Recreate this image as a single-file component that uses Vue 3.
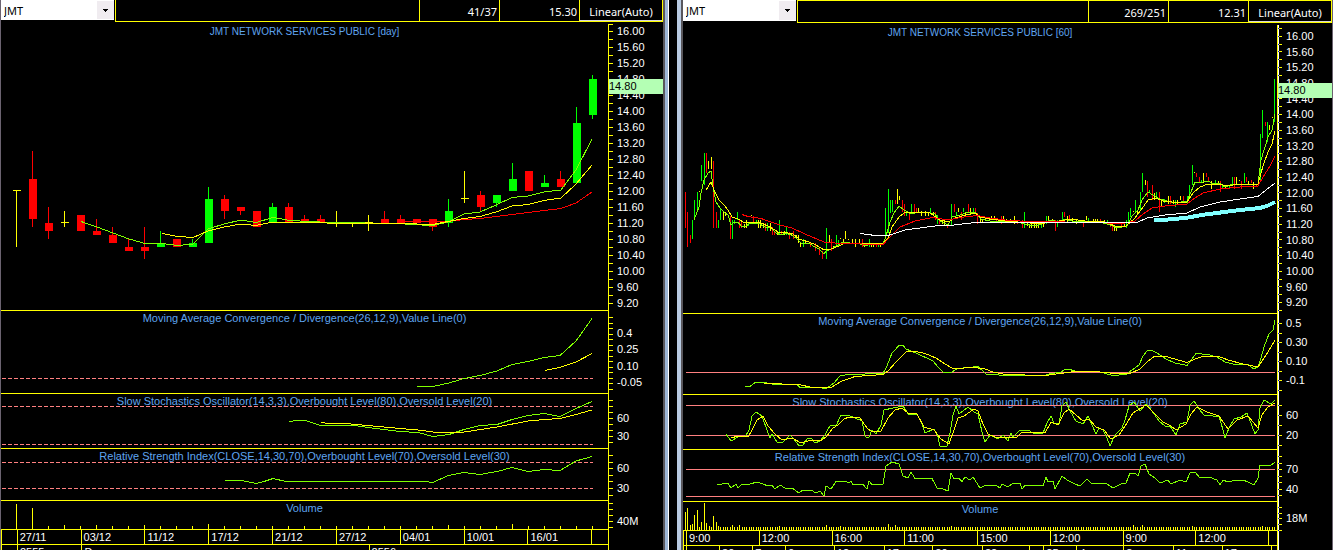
<script setup>
import { ref } from 'vue';

// high, body top, body bottom, low
const dayPrices = [
  [12.0, 12.0, 12.0, 10.6], [13.0, 12.3, 11.3, 11.1], [11.6, 11.2, 11.0, 10.8], [11.5, 11.2, 11.2, 11.1],
  [11.4, 11.4, 11.0, 11.0], [11.3, 11.0, 10.9, 10.9], [11.1, 10.9, 10.7, 10.7], [10.8, 10.6, 10.5, 10.5],
  [11.1, 10.6, 10.5, 10.3], [11.0, 10.7, 10.6, 10.6, 1], [10.8, 10.8, 10.6, 10.6], [10.8, 10.7, 10.6, 10.6, 1],
  [12.1, 11.8, 10.7, 10.7, 1], [11.9, 11.8, 11.5, 11.3], [11.6, 11.6, 11.5, 11.4], [11.5, 11.5, 11.1, 11.1],
  [11.7, 11.6, 11.2, 11.2, 1], [11.7, 11.6, 11.2, 11.2], [11.4, 11.3, 11.2, 11.2], [11.4, 11.3, 11.2, 11.2],
  [11.5, 11.2, 11.2, 11.1], [11.2, 11.2, 11.2, 11.1], [11.4, 11.2, 11.2, 11.0], [11.5, 11.3, 11.2, 11.2],
  [11.4, 11.3, 11.2, 11.2], [11.3, 11.3, 11.2, 11.2], [11.3, 11.3, 11.1, 11.0], [11.8, 11.5, 11.2, 11.1, 1],
  [12.5, 11.8, 11.8, 11.7], [12.0, 11.9, 11.6, 11.5], [11.9, 11.9, 11.7, 11.6, 1], [12.7, 12.3, 12.0, 12.0, 1],
  [12.5, 12.5, 12.0, 12.0], [12.4, 12.2, 12.1, 12.1, 1], [12.5, 12.3, 12.1, 12.1], [14.1, 13.7, 12.2, 12.2, 1],
  [14.9, 14.8, 13.9, 13.8, 1]
];
const dayY = (price) => Math.round(31 + (16 - price) * 40);
const dayBars = dayPrices.flatMap(([high, top, bottom, low, up], i) => {
  const x = 16 + i * 16;
  const doji = top === bottom;
  const color = doji ? 'y' : up ? 'g' : 'r';
  const body = doji
    ? { x: x - 3, y: dayY(top) - 1, w: 8, h: 1, color }
    : { x: x - 3, y: dayY(top), w: 8, h: dayY(bottom) - dayY(top), color };
  return [{ x, y: dayY(high), w: 1, h: dayY(low) - dayY(high), color }, body];
});

// x, top, bottom, colour
const hourBars = `685 192 228 r,687 212 247 r,690 235 243 r,692 220 239 g,694 200 220 g,697 192 210 g,699 191 192 y,
701 165 181 g,704 153 185 g,706 153 173 r,708 161 169 y,711 157 169 y,713 161 228 r,716 212 228 r,718 220 228 g,
720 208 220 g,723 212 220 y,725 212 216 y,730 216 239 r,732 220 239 g,734 220 224 g,737 212 220 g,739 220 228 r,
741 222 228 r,744 224 228 y,746 220 228 y,748 222 226 g,751 215 216 y,753 216 223 r,756 220 224 g,758 220 228 y,
760 220 228 y,763 223 228 y,765 223 231 r,767 223 231 g,770 223 231 y,772 227 235 r,774 231 235 r,777 231 235 y,
779 220 235 g,781 231 235 r,784 231 235 y,786 227 235 g,789 232 239 r,791 233 236 y,793 231 239 r,796 235 239 y,
798 235 243 y,800 243 247 y,803 239 247 g,805 241 244 y,810 243 247 r,815 243 251 r,819 247 255 r,822 251 259 r,
826 228 259 g,829 235 243 y,831 239 251 r,833 246 247 y,836 235 247 g,838 240 247 g,840 238 239 y,843 239 243 y,
845 231 239 y,848 239 240 y,852 239 243 y,855 239 247 y,859 239 243 y,862 239 247 r,864 243 247 y,869 239 247 g,
871 243 247 y,873 243 247 y,876 243 247 r,878 243 247 g,880 243 247 y,
885 208 237 g,888 189 233 g,890 200 213 g,892 200 212 g,895 200 204 r,897 189 204 y,899 196 200 y,902 200 212 r,
904 204 216 r,906 212 216 g,909 212 220 r,911 204 212 g,914 204 212 r,916 208 212 r,918 208 212 y,921 211 216 y,
925 211 216 y,928 212 216 y,930 208 214 g,933 212 216 y,935 212 220 r,937 215 224 g,939 220 224 r,942 220 224 y,
944 220 225 y,947 224 228 r,951 204 225 g,954 204 212 r,956 212 216 g,958 208 212 y,961 212 220 r,963 208 212 g,
965 212 216 y,968 204 212 r,970 208 212 y,973 208 212 g,975 208 213 r,977 213 224 r,980 216 223 y,982 220 223 y,
985 219 221 g,989 218 220 y,991 216 220 y,994 216 220 y,996 219 222 r,999 219 222 y,
1001 216 224 r,1003 216 223 y,1006 219 223 y,1010 219 222 y,1014 216 224 y,1017 220 224 r,1022 220 228 r,
1024 212 228 g,1027 222 226 y,1029 224 228 y,1031 224 228 y,1034 224 228 y,1036 224 228 y,1038 224 228 y,1041 224 228 g,
1043 222 227 y,1046 216 224 g,1048 216 220 y,1052 219 222 y,1055 220 231 r,1057 220 227 g,1059 220 223 y,
1062 212 222 g,1064 212 217 r,1067 216 222 y,1069 215 220 r,1072 218 222 y,1076 220 224 y,1079 220 223 r,
1083 220 227 r,1086 216 220 y,1088 218 222 g,1093 219 223 y,1095 219 223 y,1097 219 223 y,1100 219 222 r,
1104 220 224 y,1107 220 223 g,1110 222 227 r,1112 224 231 r,1114 227 231 y,1116 227 231 y,1121 224 228 r,
1124 224 227 y,1126 220 228 g,1128 212 222 g,1130 208 217 g,1133 211 212 y,1135 200 213 g,1137 210 215 y,
1140 192 210 g,1142 173 192 g,1145 180 185 y,1147 181 197 r,1149 190 193 g,1152 185 200 r,1154 193 200 y,
1156 192 196 g,1159 192 212 r,1161 199 207 y,1164 199 203 g,1168 196 204 y,1170 196 204 r,1173 200 204 y,
1175 200 207 g,1177 200 204 y,1180 196 200 y,1183 196 203 r,1187 196 203 g,1189 185 198 g,1192 165 185 g,
1194 172 173 y,1196 173 177 r,1199 177 183 r,1201 180 183 g,1203 173 183 y,1206 173 177 r,1208 177 182 r,
1211 181 189 y,1215 180 185 g,1218 181 184 y,1220 181 192 r,1222 185 188 g,1225 186 189 y,1229 185 189 g,
1232 177 185 g,1234 177 189 r,1236 177 185 y,1239 180 181 y,1241 181 189 r,1244 173 183 g,1246 177 182 r,
1248 181 185 y,1251 180 183 r,1253 182 189 y,1256 184 187 r,1260 134 182 g,1262 110 138 g,1265 122 126 r,
1267 122 142 g,1269 125 130 y,1272 117 118 y,1274 79 122 g`
  .split(',')
  .map((row) => {
    const [x, top, bottom, color] = row.trim().split(' ');
    return { x: +x, y: +top, w: 1, h: bottom - top, color };
  });

const volumeBars = (first, step, count, base, tops) =>
  Array.from({ length: count }, (_, i) => {
    const x = Math.round(first + i * step);
    const h = tops[i] || 3;
    return { x, y: base - h, w: 1, h, color: 'y' };
  });

const ticks = (from, step, count) => Array.from({ length: count }, (_, i) => Math.round(from + i * step));
const priceLabels = (from, step) =>
  Array.from({ length: 18 }, (_, i) => ({ y: Math.round(from + i * step), text: (16 - i * 0.4).toFixed(2) }));

const charts = ref([
  {
    id: 'day',
    ratio: '41/37',
    last: '15.30',
    left: 1,
    width: 607,
    top: 22,
    tag: 79,
    panels: [
      {
        title: 'JMT NETWORK SERVICES PUBLIC [day]',
        top: 22,
        height: 289,
        bars: dayBars,
        lines: [
          { color: 'red', points: '405,221.5 448,221.5 464,219.5 480,218.5 512,214.5 544,210.5 561,208.5 576,203 592,192' },
          { color: 'lime', points: '81,221.5 97,227 113,233 129,239 145,243.5 162,243.5 178,245.5 193,244 208,229 224,224 241,220 256,222.5 273,217.5 290,220.5 310,221.5 330,222.5 400,223.5 410,224.5 433,225.5 448,222 464,214 480,212 496,205 512,197.5 528,196 544,192 561,190 576,170 592,139' },
          { color: 'yellow', points: '162,233.5 178,236.5 193,237.5 208,231 224,227 241,224 256,225.5 270,222.5 313,222.5 340,223.5 400,223.5 433,224.5 448,221.5 464,218.5 480,216.5 496,212 512,206 528,204.5 544,200.5 561,198 576,184 592,165' }
        ]
      },
      {
        title: 'Moving Average Convergence / Divergence(26,12,9),Value Line(0)',
        top: 311,
        height: 83,
        levels: [378],
        lines: [
          { color: 'lime', points: '417,386.5 433,386.5 449,383 464,378.5 480,375.5 497,371 512,364.5 528,361.5 544,357.5 560,355.5 576,341 592,318.5' },
          { color: 'yellow', points: '545,370.5 560,367.5 576,362 592,353.5' }
        ]
      },
      {
        title: 'Slow Stochastics Oscillator(14,3,3),Overbought Level(80),Oversold Level(20)',
        top: 394,
        height: 55,
        levels: [406, 444],
        lines: [
          { color: 'lime', points: '289,421.5 297,420.5 305,420.5 312,422.5 320,425.5 355,425.5 368,427.5 400,431.5 418,432.5 433,436.5 449,434.5 464,429.5 480,425.5 497,424.5 512,419.5 528,415.5 544,413.5 560,416.5 576,408.5 592,401.5' },
          { color: 'yellow', points: '321,422.5 329,423.5 345,423.5 368,425.5 400,428.5 418,430 433,432 449,433 464,432 497,427 528,421 544,419.5 560,418.5 576,414.5 592,410' }
        ]
      },
      {
        title: 'Relative Strength Index(CLOSE,14,30,70),Overbought Level(70),Oversold Level(30)',
        top: 449,
        height: 52,
        levels: [462, 488],
        lines: [
          { color: 'lime', points: '225,480.5 242,480.5 256,483.5 264,481.5 273,478.5 286,481.5 424,481.5 433,482.5 448,475.5 464,472.5 480,474.5 497,471.5 512,467.5 528,471.5 544,469.5 560,470.5 576,461 592,456.5' }
        ]
      },
      {
        title: 'Volume',
        top: 501,
        height: 29,
        bars: volumeBars(16, 16, 37, 529, { 0: 25, 1: 21, 3: 4, 5: 4, 8: 4, 12: 5, 27: 4, 31: 5 }),
        lines: []
      }
    ],
    times: [
      [15, ''], [64, '27/11'], [64, '03/12'], [64, '11/12'], [64, '17/12'], [64, '21/12'], [64, '27/12'],
      [64, '04/01'], [64, '10/01'], [64, '16/01'], [16, '']
    ],
    days: [[15, ''], [64, '2555'], [288, 'D'], [240, '2556']],
    ticks: [24, ...ticks(31, 8, 35), ...ticks(317, 5.5, 14), ...ticks(400, 6, 8), ...ticks(455, 6.6, 7), ...ticks(503, 6, 5)],
    labels: [
      ...priceLabels(31, 16),
      { y: 333, text: '0.4' }, { y: 349, text: '0.25' }, { y: 366, text: '0.10' }, { y: 382, text: '-0.05' },
      { y: 418, text: '60' }, { y: 436, text: '30' }, { y: 468, text: '60' }, { y: 488, text: '30' }, { y: 521, text: '40M' }
    ]
  },
  {
    id: 'hour',
    ratio: '269/251',
    last: '12.31',
    left: 683,
    width: 594,
    top: 23,
    tag: 83,
    panels: [
      {
        title: 'JMT NETWORK SERVICES PUBLIC [60]',
        top: 23,
        height: 291,
        bars: hourBars,
        lines: [
          { color: 'lime', points: '694,220 697,212 699,207 701,193 704,180 708,173 711,171 713,187 716,202 720,208 725,213 728,215 731,225 734,222 738,222 741,226 745,227 750,223 758,223 765,227 770,227 776,233 781,235 786,233 791,235 796,238 801,243 810,244 815,247 819,249 824,254 826,251 831,249 836,246 843,242 850,243 858,243 865,246 871,244 883,244 886,236 890,222 894,213 899,206 904,210 911,214 918,212 930,213 935,214 940,221 948,225 952,217 960,215 968,212 975,212 981,219 990,221 1014,221 1024,224 1035,226 1042,224 1050,220 1060,222 1065,219 1072,221 1085,221 1100,222 1110,225 1118,228 1127,226 1132,216 1138,210 1142,200 1148,192 1153,195 1160,199 1167,201 1175,203 1187,201 1191,192 1195,182 1203,182 1208,181 1213,184 1219,183 1225,187 1233,184 1258,184 1261,160 1265,147 1268,137 1272,130 1275,114' },
          { color: 'yellow', points: '706,190 711,182 714,190 719,200 724,205 728,210 732,217 738,219 745,223 753,222 761,223 770,227 778,232 788,233 793,234 799,239 809,242 816,245 824,250 831,249 839,246 845,243 861,243 883,244 888,238 892,227 899,217 904,213 918,212 930,213 940,220 948,222 955,218 966,215 975,213 981,217 990,219 1005,221 1030,223 1045,223 1060,221 1070,219 1085,221 1105,222 1115,226 1126,226 1135,218 1141,210 1148,200 1156,198 1163,201 1172,202 1187,202 1193,193 1200,187 1208,184 1219,184 1227,186 1240,184 1250,185 1258,184 1263,166 1268,152 1272,144 1275,131' },
          { color: 'red', points: '742,214.5 748,216.5 761,218.5 780,225 792,228 805,234 824,242 840,243.5 883,244.5 890,237 900,227 915,221 933,217.5 948,220 960,217.5 978,215.5 990,218 1009,220.5 1030,221.5 1100,222.5 1120,224 1135,221 1143,214 1152,208 1165,206 1187,204 1195,198 1203,193 1220,189 1240,187 1258,186 1263,177 1270,166 1275,156' },
          { color: 'white', points: '860,233.5 868,234.5 875,235.5 888,235.5 905,230 935,226 950,225.5 975,222.5 1137,222.5 1147,218 1165,215 1187,213 1200,207 1220,202 1240,199 1258,196.5 1266,190 1275,183' },
          { color: 'cyan', points: '1154,220.5 1168,219.5 1185,218 1205,214.5 1240,210 1260,208 1267,206 1275,202' }
        ]
      },
      {
        title: 'Moving Average Convergence / Divergence(26,12,9),Value Line(0)',
        top: 314,
        height: 81,
        levels: [372],
        lines: [
          { color: 'lime', points: '745,386.5 750,386.5 755,382.5 764,382.5 775,384.5 797,384.5 800,387.5 820,387.5 825,389 830,386 834,383 840,376 847,374.5 883,373.5 887,366 892,353 899,345.5 903,345.5 906,349 916,353 933,361 938,367 943,372 950,373 958,368.5 978,366.5 986,374 1005,375.5 1045,375.5 1050,373.5 1060,372.5 1065,369.5 1070,369.5 1076,371.5 1100,372 1113,375.5 1126,374.5 1132,370 1139,365 1143,356 1147,351 1152,350.5 1157,353 1166,359 1175,363 1187,365.5 1192,359 1196,353.5 1208,354.5 1217,357 1225,362 1235,364.5 1248,364.5 1253,368.5 1258,367.5 1261,358 1264,347 1269,334 1273,330 1275,320' },
          { color: 'yellow', points: '764,383.5 799,384.5 812,387.5 832,387 842,381 855,376.5 883,374.5 888,371 896,362 906,352 916,351.5 925,353.5 936,358 945,364 953,368.5 975,367.5 985,369 993,372 1005,374.5 1045,375.5 1060,373.5 1075,371.5 1100,372 1115,373.5 1130,373.5 1140,369 1148,361 1155,356 1166,356.5 1178,360 1187,362.5 1195,359 1203,356.5 1219,356.5 1228,360 1245,364.5 1258,367 1262,361 1268,352 1275,340' }
        ]
      },
      {
        title: 'Slow Stochastics Oscillator(14,3,3),Overbought Level(80),Oversold Level(20)',
        top: 395,
        height: 55,
        levels: [405, 435],
        lines: [
          { color: 'lime', points: '726,434 731,441 740,436 745,437 749,430 752,416 756,412 762,416 767,430 770,438 772,434 777,442 783,442 790,435 794,439 799,446 803,445 807,439 811,438 815,443 820,441 825,435 828,429 831,425 836,426 841,415 848,415 862,421 865,436 867,438 869,437 872,430 876,434 881,425 884,410 893,408 903,406 909,415 917,414 922,424 925,433 934,429 938,437 940,446 947,446 950,433 953,415 956,406 959,414 968,407 974,412 978,414 982,432 985,442 990,435 998,439 1003,435 1008,441 1011,433 1013,437 1020,430 1024,431 1028,430 1033,433 1043,433 1047,423 1051,416 1054,423 1059,424 1062,406 1066,402 1070,411 1076,421 1083,424 1088,416 1096,434 1099,428 1103,430 1107,438 1110,446 1115,435 1122,428 1125,420 1129,406 1134,402 1140,411 1146,404 1152,411 1159,421 1165,426 1170,426 1176,435 1180,424 1187,422 1190,405 1194,401 1199,409 1204,415 1213,416 1219,416 1223,430 1225,438 1229,428 1234,419 1241,417 1247,413 1252,426 1255,434 1258,430 1260,408 1264,400 1271,404 1275,400' },
          { color: 'yellow', points: '731,438 738,436 748,437 752,430 757,420 763,416 768,426 775,434 782,440 792,438 801,443 811,440 820,441 826,437 833,428 838,425 844,419 849,417 860,418 867,428 872,432 881,431 888,418 895,410 902,408 908,413 917,414 924,427 934,430 941,439 949,444 954,430 958,418 964,416 974,409 978,411 983,424 988,434 995,437 1017,437 1022,432 1045,433 1051,422 1058,425 1064,413 1069,409 1076,415 1083,421 1089,419 1096,427 1104,430 1111,439 1119,435 1127,423 1133,413 1146,405 1152,411 1163,422 1171,426 1176,430 1186,424 1191,414 1197,407 1207,412 1219,416 1228,429 1237,420 1248,416 1258,428 1262,415 1268,407 1275,403' }
        ]
      },
      {
        title: 'Relative Strength Index(CLOSE,14,30,70),Overbought Level(70),Oversold Level(30)',
        top: 450,
        height: 52,
        levels: [469, 496],
        lines: [
          { color: 'lime', points: '717,484.5 728,483.5 731,488 736,484 738,488 741,485 750,484 757,482 763,484 768,486 772,485 775,489 780,485 785,488 792,488 799,493 803,490 811,490 816,493 820,491 824,496 826,486 831,489 836,481.5 846,481.5 849,483 851,481 853,484.5 863,484.5 867,489 869,481 872,484.5 883,484.5 886,466 892,462 899,464 903,476 908,478 911,472 915,478.5 932,478.5 937,488 943,489 948,491 951,473 954,479 959,478 962,482 965,477 970,480 973,477 980,488 985,485.5 996,485.5 1000,488 1002,484 1008,487 1012,484 1020,483 1022,489 1025,485.5 1043,485.5 1046,477 1048,482 1053,481 1055,489 1062,476 1067,480 1075,484 1080,486 1087,479 1092,484 1100,483 1107,484 1113,488 1123,483 1126,483 1130,473 1135,473 1138,476 1141,466 1145,464 1149,474 1155,478 1160,483 1168,480 1171,484 1180,480 1186,482 1190,473 1195,472 1200,478 1209,477 1217,480 1220,485 1223,480 1228,482 1236,480 1243,480 1248,482 1254,485 1258,478 1260,465 1270,466 1275,462' }
        ]
      },
      {
        title: 'Volume',
        top: 502,
        height: 29,
        bars: volumeBars(685, 2.356, 251, 530, {
          0: 18, 1: 22, 2: 5, 3: 6, 4: 15, 5: 20, 7: 8, 8: 27, 9: 7, 10: 4, 12: 14, 13: 8, 14: 4,
          20: 5, 23: 5, 40: 4, 60: 5, 66: 4, 86: 6, 89: 5, 113: 4, 190: 5, 194: 5, 215: 4, 245: 4
        }),
        lines: []
      }
    ],
    times: [
      [2, ''], [73, '9:00'], [73, '12:00'], [73, '16:00'], [73, '11:00'], [73, '15:00'], [73, '12:00'],
      [73, '9:00'], [73, '12:00'], [8, '']
    ],
    days: [
      [2, ''], [33, ''], [33, '30'], [33, '7'], [49, '9'], [50, '12'], [49, '17'], [50, '20'], [47, '22'],
      [14, ''], [33, '25'], [47, '4'], [50, '8'], [49, '11'], [50, '17'], [5, '']
    ],
    ticks: [...ticks(28, 7.83, 37), ...ticks(323, 9.5, 8), ...ticks(405, 10, 5), ...ticks(456, 6.5, 7), ...ticks(507, 5.7, 5)],
    labels: [
      ...priceLabels(36, 15.67),
      { y: 323, text: '0.5' }, { y: 342, text: '0.30' }, { y: 361, text: '0.10' }, { y: 380, text: '-0.1' },
      { y: 415, text: '60' }, { y: 435, text: '20' }, { y: 469, text: '70' }, { y: 489, text: '40' }, { y: 518, text: '18M' }
    ]
  }
]);
</script>

<template>
  <main class="desk">
    <section v-for="chart in charts" :key="chart.id" class="window" :class="chart.id">
      <header class="toolbar">
        <div class="symbol">
          <select aria-label="Symbol">
            <option>JMT</option>
          </select>
          <span class="arrow">
            <svg width="5" height="3" viewBox="0 0 5 3"><path d="M0 0h5v1h-1v1h-1v1h-1v-1h-1v-1h-1z" /></svg>
          </span>
        </div>
        <div class="info">
          <span class="blank"></span>
          <span class="cell">{{ chart.ratio }}</span>
          <span class="cell">{{ chart.last }}</span>
          <button type="button" class="scale">Linear(Auto)</button>
        </div>
      </header>

      <div class="body">
        <div class="plots">
          <div v-for="panel in chart.panels" :key="panel.top" class="panel" :style="{ height: panel.height + 'px' }">
            <h2>{{ panel.title }}</h2>
            <svg
              :viewBox="`${chart.left} ${panel.top} ${chart.width} ${panel.height - 1}`"
              preserveAspectRatio="none"
              shape-rendering="crispEdges"
            >
              <line
                v-for="level in panel.levels"
                :key="level"
                class="level"
                :x1="chart.left + (chart.id === 'day' ? 1 : 3)"
                :x2="chart.left + chart.width - (chart.id === 'day' ? 15 : 2)"
                :y1="level + 0.5"
                :y2="level + 0.5"
              />
              <rect
                v-for="(bar, i) in panel.bars"
                :key="i"
                :class="bar.color"
                :x="bar.x"
                :y="bar.y"
                :width="bar.w"
                :height="bar.h"
              />
              <polyline v-for="(line, i) in panel.lines" :key="i" :class="line.color" :points="line.points" />
            </svg>
          </div>
          <div class="row">
            <span v-for="(cell, i) in chart.times" :key="i" :style="{ flexGrow: cell[0] }">{{ cell[1] }}</span>
          </div>
          <div class="row days">
            <span v-for="(cell, i) in chart.days" :key="i" :style="{ flexGrow: cell[0] }">{{ cell[1] }}</span>
          </div>
        </div>

        <svg
          class="axis"
          width="55"
          :height="550 - chart.top"
          :viewBox="`0 ${chart.top} 55 ${550 - chart.top}`"
          shape-rendering="crispEdges"
        >
          <rect class="y" x="0" :y="chart.top + 2" width="1" height="530" />
          <rect v-if="chart.id === 'hour'" class="edge" x="1" :y="chart.top + 2" width="1" height="530" />
          <rect v-for="y in chart.ticks" :key="y" class="y" x="1" :y="y" width="4" height="1" />
          <template v-if="chart.id === 'hour'">
            <rect v-for="y in chart.ticks" :key="y" class="dot" x="1" :y="y" width="1" height="1" />
          </template>
          <text v-for="label in chart.labels" :key="label.y" x="9" :y="label.y + 4">{{ label.text }}</text>
          <rect class="tag" x="1" :y="chart.tag" width="54" height="15" />
          <text class="tag-text" x="1" :y="chart.tag + 11">14.80</text>
        </svg>
      </div>
    </section>
  </main>
</template>

<style>
body {
  margin: 0;
  background: #000;
}
</style>

<style scoped>
.desk {
  display: grid;
  grid-template-columns: minmax(0, 669fr) minmax(0, 656fr);
  column-gap: 8px;
  height: 100vh;
  overflow: hidden;
  background: #000;
  font-family: "Liberation Sans", Arial, sans-serif;
  font-size: 11px;
  color: #fff;
}

.window {
  box-sizing: border-box;
  overflow: hidden;
  border-left: 1px solid #6b6370;
  border-right: 2px solid #59575c;
}

.window.day {
  margin-right: 4px;
  box-shadow: 3px 0 0 #9db6d6, 4px 0 0 #fff;
}

.window.hour {
  margin-left: 4px;
  border-left: 2px solid #59575c;
  border-right: 1px solid #6b6370;
  box-shadow: -4px 0 0 #b9cbe2;
}

.toolbar {
  display: flex;
  gap: 1px;
  height: 22px;
  font-family: "Noto Sans", Tahoma, sans-serif;
}

.hour .toolbar {
  height: 23px;
}

.symbol {
  display: flex;
  width: 113px;
  height: 20px;
  background: #fff;
}

.hour .symbol {
  height: 21px;
}

.symbol select {
  flex: 1;
  appearance: none;
  padding: 0 3px;
  border: 0;
  background: #fff;
  color: #000;
  font: inherit;
}

.arrow {
  display: flex;
  align-items: center;
  justify-content: center;
  width: 17px;
  margin: 1px 0;
  background: #f0ecf0;
}

.info {
  flex: 1;
  display: flex;
  box-sizing: border-box;
  border: 1px solid #ff0;
  border-top: 0;
}

.hour .info {
  border-top: 1px solid #ff0;
}

.blank {
  flex: 1;
}

.cell {
  box-sizing: border-box;
  width: 80px;
  padding: 4px 2px 0 0;
  border-left: 1px solid #ff0;
  line-height: 16px;
  text-align: right;
}

.scale {
  box-sizing: border-box;
  width: 83px;
  padding: 4px 0 0;
  border: 0;
  border-left: 1px solid #ff0;
  border-bottom: 1px solid #d8d8d8;
  background: #000;
  color: #fff;
  font: inherit;
  line-height: 16px;
}

.body {
  display: grid;
  grid-template-columns: minmax(0, 1fr) 55px;
}

.panel {
  position: relative;
  box-sizing: border-box;
  border-bottom: 1px solid #ff0;
}

.panel h2 {
  position: absolute;
  left: 0;
  right: 0;
  top: 0;
  margin: 0;
  font-size: 11px;
  font-weight: 400;
  line-height: 15px;
  text-align: center;
  white-space: nowrap;
  color: #5fa5f0;
}

.panel:first-child h2 {
  top: 2px;
  font-size: 10px;
}

.panel svg {
  position: relative;
  display: block;
  width: 100%;
  height: 100%;
}

polyline {
  fill: none;
  stroke-width: 1;
  vector-effect: non-scaling-stroke;
}

polyline.lime {
  stroke: #80ff00;
}

polyline.yellow {
  stroke: #ff0;
}

polyline.red {
  stroke: #f00;
}

polyline.white {
  stroke: #fff;
}

polyline.cyan {
  stroke: #80ffff;
  stroke-width: 4;
}

.level {
  stroke: #ff8080;
  vector-effect: non-scaling-stroke;
}

.day .level {
  stroke-dasharray: 4 2;
}

.y {
  fill: #ff0;
}

.g {
  fill: #0f0;
}

.r {
  fill: #f00;
}

.edge {
  fill: #fff;
}

.dot {
  fill: #00f;
}

.axis {
  display: block;
}

.axis text {
  fill: #fff;
}

.axis .tag {
  fill: #b4ffb4;
}

.axis .tag-text {
  fill: #000;
}

.row {
  display: flex;
  box-sizing: border-box;
  height: 15px;
  overflow: hidden;
  border-bottom: 1px solid #ff0;
}

.row span {
  box-sizing: border-box;
  flex: 0 0 0;
  min-width: 0;
  overflow: hidden;
  border-left: 1px solid #ff0;
  line-height: 14px;
  text-indent: 2px;
  white-space: nowrap;
}

.days {
  border-bottom: 0;
}
</style>
